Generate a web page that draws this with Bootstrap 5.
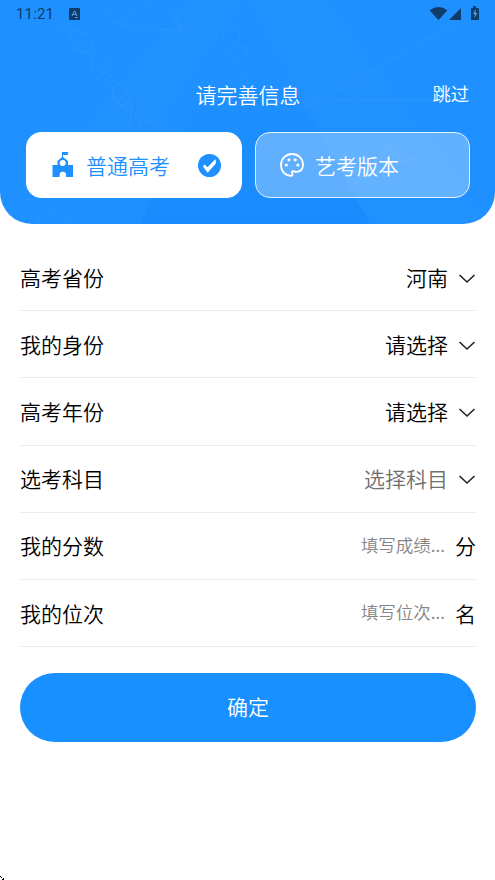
<!DOCTYPE html>
<html lang="zh-CN">
<head>
<meta charset="utf-8">
<meta name="viewport" content="width=device-width, initial-scale=1">
<title>请完善信息</title>
<link href="https://cdn.jsdelivr.net/npm/bootstrap@5.3.0/dist/css/bootstrap.min.css" rel="stylesheet">
<style>
body{font-family:"Noto Sans CJK SC",sans-serif;font-size:21px;font-weight:350;line-height:30px;color:#000;height:880px;overflow:hidden}
svg{display:block;flex-shrink:0}
.hero{height:224px;background:#1e90ff;border-radius:0 0 32px 32px}
.hero-art{z-index:0}
.status{height:28px;padding:0 15px 0 16px;color:#0f3c6b;font:400 15px/28px Roboto,sans-serif;letter-spacing:.15px}
.status-app{margin-left:15px}
.title-row{height:104px;padding:51px 26px 0;display:grid;grid-template-columns:1fr auto 1fr}
.title-text{padding-left:1px}
.skip{font-size:18.3px;line-height:29px}
.choices{padding:0 25px 0 26px;gap:13px}
.choice{height:66px;border-radius:15px;border:1px solid #fff;font-size:21px;font-weight:350;line-height:30px;flex:1 1 0;padding:0 20px 0 25px}
.choice-on,.choice-on:hover{background:#fff;color:#1e90ff}
.choice-off,.choice-off:hover{background:rgba(255,255,255,.3);color:#fff;border-color:#e4f2ff;padding-left:24px}
.choice-off span{margin-left:11px}
.fields{padding:20px 19px 0 20px}
.field{height:67.2px;border-bottom:1.5px solid #eee}
.field svg{margin-top:3px}
.field span{padding-bottom:1px}
.value{margin-right:10px}
.dim{color:#6f6f6f}
.field .hint{font-size:17.5px;color:#858585;margin-right:10px;padding-bottom:2px}
.confirm,.confirm:hover{height:69px;margin:26px 19px 0 20px;background:#1890ff;color:#fff;font-size:21px;font-weight:350;line-height:30px;border:0;padding:0 0 4px}
.corner{left:0;bottom:0}
</style>
<script src="https://cdn.jsdelivr.net/npm/bootstrap@5.3.0/dist/js/bootstrap.bundle.min.js"></script>
</head>
<body class="bg-white">
<header class="hero position-relative overflow-hidden text-white">
  <svg class="hero-art position-absolute top-0 start-0" width="495" height="224" viewBox="0 0 495 224" fill="none" stroke="#fff" aria-hidden="true">
    <defs><linearGradient id="shade" x2="0" y2="1"><stop offset=".35" stop-color="#0878f5" stop-opacity="0"/><stop offset="1" stop-color="#0878f5" stop-opacity=".2"/></linearGradient></defs>
    <path d="M80 130 185 0h62L157 130zM245 0h85l160 224H370z" fill="#fff" fill-opacity=".01" stroke="none"/>
    <path d="M140 224 245 0l125 224z" fill="url(#shade)" stroke="none"/>
    <g stroke-opacity=".03" stroke-width="2">
      <path d="M55 26C69 26 77 31 89 34M70 28C71 41 68 53 92 55 108 57 112 64 112 80 124 85 131 94 131 110L150 122M70 28C88 34 95 39 92 55 89 69 92 80 112 87 111 99 120 105 131 112L129 130"/>
      <path d="M72 43 87 34M75 49 91 40M81 53 94 46M94 72 107 62M97 78 110 69M103 82 112 75M116 103 128 93M121 108 131 99"/>
      <path d="M102 0 115 24 152 0M115 24 181 31 211 0M171 8 181 31"/>
      <path d="M247 79C229 57 216 36 227 29s18 4 7 19c22-7 14 13-2 11"/>
      <path d="M38 224Q37 211 53 214T77 224M140 130V120L179 132" />
    </g>
    <g stroke-opacity=".025" stroke-width="4">
      <path d="M305 109 455 24M309 100H477M350 100Q363 91 356 79M305 99v11"/>
      <path d="M318 0 332 17M345 196 390 145 398 163 415 157"/>
    </g>
  </svg>
  <div class="position-relative">
    <div class="status d-flex align-items-center">
      <span>11:21</span>
      <svg class="status-app" width="11" height="12" viewBox="0 0 11 12"><rect width="11" height="12" rx="1" fill="#0f3c6b"/><path d="m3 8 2.3-5h.5l2.1 5M3.8 6.4h3.5M6 9.6h3" fill="none" stroke="#65adef" stroke-width=".9"/></svg>
      <svg class="ms-auto" width="51" height="16" viewBox="0 0 51 16" fill="#0f3c6b"><path d="M.5 4.2Q9.5-2 18.5 4.2L9.5 14zM20 14 32 2v12zM42 2h2V0h3v2h2q1 0 1 1v10q0 1-1 1h-6q-1 0-1-1z"/><path d="M46.7 3 44 8h1.8l-.5 4 3-5h-1.8z" fill="#4ca5fa"/></svg>
    </div>
    <div class="title-row">
      <span></span><div class="title-text">请完善信息</div><div class="skip text-end">跳过</div>
    </div>
    <div class="choices d-flex">
      <button type="button" class="btn choice choice-on d-flex align-items-center">
        <svg width="22" height="26" viewBox="0 0 22 26"><path fill="#1e90ff" fill-rule="evenodd" d="M10 0h6.5l-1 1.5 1 1.5H11v2l5 4v4h5v12h-7v-2a3.2 3.2 0 0 0-6.4 0v2H.5V13h5V9L10 5zM10.7 8a3 3 0 1 0 0 6 3 3 0 0 0 0-6z"/></svg>
        <span class="ms-2 ps-1">普通高考</span>
        <svg class="ms-auto" width="23" height="23" viewBox="0 0 23 23"><circle cx="11.5" cy="11.5" r="11.5" fill="#1e90ff"/><path d="m4.8 12.2 2-1.7 2.7 2.7 7.3-7.5 1-.3v4.2l-8.2 9.2z" fill="#fff"/></svg>
      </button>
      <button type="button" class="btn choice choice-off d-flex align-items-center">
        <svg width="24" height="24" viewBox="0 0 24 24"><path d="M11.5 22.8C4.9 22.7 1 17.8 1 12A11 11 0 0 1 12 1c6.2 0 11 4.7 11 10.5 0 4.8-2.7 7.4-6.8 7.4-2.1 0-3.6-1.7-4.2-.3-.4 1.2 1.6 4.1-.5 4.2z" fill="none" stroke="#fff" stroke-width="1.8"/><g fill="#fff"><circle cx="6.3" cy="12" r="1.6"/><circle cx="9" cy="6.8" r="1.6"/><circle cx="15.2" cy="6.8" r="1.6"/><circle cx="17.9" cy="12" r="1.6"/></g></svg>
        <span>艺考版本</span>
      </button>
    </div>
  </div>
</header>
<main>
  <div class="fields">
    <div class="field d-flex align-items-center"><span class="me-auto">高考省份</span><span class="value">河南</span><svg width="18" height="12" viewBox="0 0 18 12"><path d="m1.5 2 7.5 7 7.5-7" fill="none" stroke="#222" stroke-width="1.6"/></svg></div>
    <div class="field d-flex align-items-center"><span class="me-auto">我的身份</span><span class="value">请选择</span><svg width="18" height="12" viewBox="0 0 18 12"><path d="m1.5 2 7.5 7 7.5-7" fill="none" stroke="#222" stroke-width="1.6"/></svg></div>
    <div class="field d-flex align-items-center"><span class="me-auto">高考年份</span><span class="value">请选择</span><svg width="18" height="12" viewBox="0 0 18 12"><path d="m1.5 2 7.5 7 7.5-7" fill="none" stroke="#222" stroke-width="1.6"/></svg></div>
    <div class="field d-flex align-items-center"><span class="me-auto">选考科目</span><span class="value dim">选择科目</span><svg width="18" height="12" viewBox="0 0 18 12"><path d="m1.5 2 7.5 7 7.5-7" fill="none" stroke="#222" stroke-width="1.6"/></svg></div>
    <div class="field d-flex align-items-center"><span class="me-auto">我的分数</span><span class="hint">填写成绩...</span><span>分</span></div>
    <div class="field d-flex align-items-center"><span class="me-auto">我的位次</span><span class="hint">填写位次...</span><span>名</span></div>
  </div>
  <div class="d-grid"><button type="button" class="btn rounded-pill confirm">确定</button></div>
</main>
<svg class="corner position-absolute" width="5" height="5" viewBox="0 0 5 5"><path d="M0 1h1v1H0zM1 2h1v1H1zM2 4h2v1H2zM3 3h1v1H3z"/></svg>
</body>
</html>
